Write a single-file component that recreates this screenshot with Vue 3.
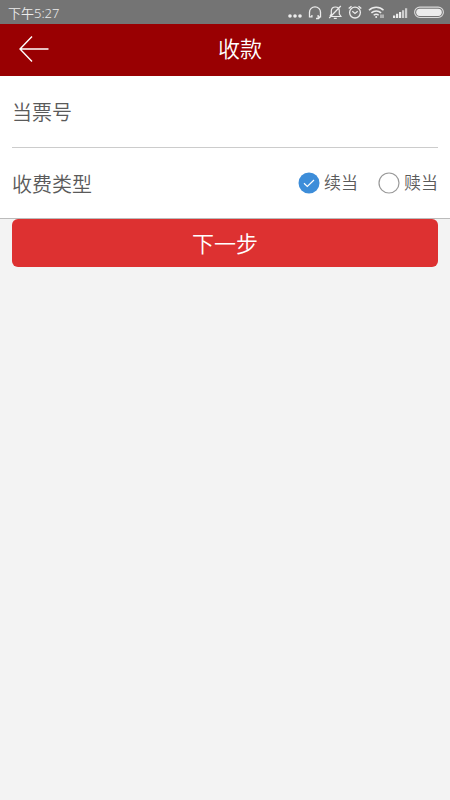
<script setup>
import { ref } from 'vue'

const ticket = ref('')
const chargeType = ref('renew')
const options = [
  { value: 'renew', label: '续当' },
  { value: 'redeem', label: '赎当' },
]
</script>

<template>
  <div class="page">
    <div class="status">
      <span class="time">下午5:27</span>
      <div class="tray">
        <svg class="dots" width="14" height="16" viewBox="0 0 14 16" fill="currentColor">
          <circle cx="2" cy="12" r="1.8" /><circle cx="7" cy="12" r="1.8" /><circle cx="12" cy="12" r="1.8" />
        </svg>
        <svg width="14" height="16" viewBox="0 0 14 16" fill="none" stroke="currentColor" stroke-width="1.3">
          <path d="M4.500 12.800H1.500V8.300a5.500 5.500 0 0 1 11 0v4.500H9.500M3.900 11v2.500M10.100 11v2.500M12 13l-1.500 1.500H8" />
        </svg>
        <svg width="14" height="16" viewBox="0 0 14 16" fill="none" stroke="currentColor" stroke-width="1.2">
          <path d="M3.500 12.500h9.500L11.300 10V6.800C11.300 4.500 9.600 3 7.300 3S3.300 4.500 3.300 6.800V10l-1.300 2M5.800 14.300h3M12.800 2L1.200 14" />
        </svg>
        <svg width="14" height="16" viewBox="0 0 14 16" fill="none" stroke="currentColor" stroke-width="1.3">
          <circle cx="7" cy="8.600" r="5.400" /><path d="M4.300 7.300L7 9.500L9.700 7.300M.7 4.600L3.500 2.200M13.300 4.600L10.500 2.200" />
        </svg>
        <svg class="wifi" width="17" height="16" viewBox="0 0 17 16" fill="none" stroke="currentColor" stroke-width="1.500">
          <path d="M1 6.200c4-4 10.500-4 14.500 0M3.400 8.900c2.800-2.600 7-2.600 9.700 0M5.700 11.300c1.500-1.300 3.600-1.300 5 0" />
          <circle cx="8.200" cy="13" r="1" fill="currentColor" stroke="none" />
          <path d="M13 10.500v3.500M15 10.500v3.500" stroke-width="1" />
        </svg>
        <svg class="signal" width="15" height="16" viewBox="0 0 15 16" fill="currentColor">
          <path d="M0 11.500h2.200V14H0zM3 9.800h2.200V14H3zM6 8h2.200V14H6z" />
          <path d="M9 6.200h2.200V14H9zM12 4.300h2.200V14H12z" opacity=".75" />
        </svg>
        <svg class="battery" width="30" height="16" viewBox="0 0 30 16">
          <rect x=".6" y="3.100" width="28.800" height="10.400" rx="5.200" fill="none" stroke="currentColor" stroke-width="1.100" opacity=".85" />
          <rect x="2.200" y="4.700" width="25.600" height="7.200" rx="3.600" fill="currentColor" />
        </svg>
      </div>
    </div>

    <header class="bar">
      <button class="back" type="button" aria-label="返回">
        <svg width="30" height="28" viewBox="0 0 30 28" fill="none" stroke="currentColor" stroke-width="1.400">
          <path d="M29.500 14H1M13 1.500L1 14l12 12.500" />
        </svg>
      </button>
      <h1>收款</h1>
    </header>

    <form @submit.prevent>
      <div class="panel">
        <div class="row ticket">
          <label for="ticket">当票号</label>
          <input id="ticket" v-model="ticket" class="field" type="text" />
        </div>
        <div class="row type" role="radiogroup" aria-labelledby="type-label">
          <span id="type-label">收费类型</span>
          <div class="options">
            <label v-for="o in options" :key="o.value" class="option">
              <input v-model="chargeType" class="radio" type="radio" name="type" :value="o.value" />
              <svg class="mark" width="22" height="22" viewBox="0 0 22 22" fill="none">
                <g v-if="chargeType === o.value">
                  <circle cx="11" cy="11" r="10.500" fill="#3d8dd9" />
                  <path d="M6 11.200l3.300 3.200L16 8" stroke="#fff" stroke-width="1.200" />
                </g>
                <circle v-else cx="11" cy="11" r="10" fill="#fff" stroke="#999" stroke-width="1.200" />
              </svg>
              <span>{{ o.label }}</span>
            </label>
          </div>
        </div>
      </div>
      <div class="action">
        <button class="next" type="submit">下一步</button>
      </div>
    </form>
  </div>
</template>

<style>
body {
  background: #f3f3f3;
}
</style>

<style scoped>
.page {
  min-height: 100vh;
  background: #f3f3f3;
  color: #5a5a5a;
  font-family: "Noto Sans CJK SC", sans-serif;
  font-weight: 350;
}
.status {
  display: flex;
  align-items: center;
  justify-content: space-between;
  height: 24px;
  padding: 0 6px 0 8px;
  background: #747474;
  color: #ececec;
}
.time {
  padding-top: 2px;
  font: 350 13px/22px "Noto Sans", "Noto Sans CJK SC", sans-serif;
}
.tray {
  display: flex;
  align-items: center;
  gap: 6px;
}
.tray svg {
  display: block;
}
.signal {
  margin-left: 2px;
}
.bar {
  display: grid;
  grid-template-columns: 48px 1fr;
  align-items: center;
  height: 52px;
  padding: 0 28px 0 10px;
  background: #990002;
  color: #fff;
}
.back {
  display: flex;
  padding: 8px 9px 10px;
  border: 0;
  background: none;
  color: inherit;
}
h1 {
  margin: 0;
  padding-bottom: 6px;
  font-size: 22px;
  font-weight: 350;
  line-height: 32px;
  text-align: center;
}
.panel {
  padding: 0 12px;
  border-bottom: 1px solid #bbb;
  background: #fff;
}
.row {
  display: flex;
  align-items: center;
  justify-content: space-between;
  height: 70px;
  font-size: 20px;
}
.ticket {
  gap: 12px;
  height: 71px;
  border-bottom: 1px solid #ccc;
}
.field {
  flex: 1;
  min-width: 0;
  padding: 8px 0;
  border: 0;
  outline: 0;
  background: none;
  color: inherit;
  font: inherit;
}
.options {
  display: flex;
  gap: 20px;
}
.option {
  display: flex;
  align-items: center;
  gap: 4px;
  position: relative;
  font-size: 17px;
}
.option span {
  line-height: 22px;
  padding-bottom: 2px;
}
.radio {
  position: absolute;
  left: 0;
  width: 22px;
  height: 22px;
  margin: 0;
  opacity: 0;
}
.action {
  padding: 0 12px;
}
.next {
  display: block;
  width: 100%;
  height: 48px;
  padding: 0 0 2px;
  border: 0;
  border-radius: 6px;
  background: #dd3131;
  color: #fff;
  font: 350 22px/46px "Noto Sans CJK SC", sans-serif;
}
</style>
